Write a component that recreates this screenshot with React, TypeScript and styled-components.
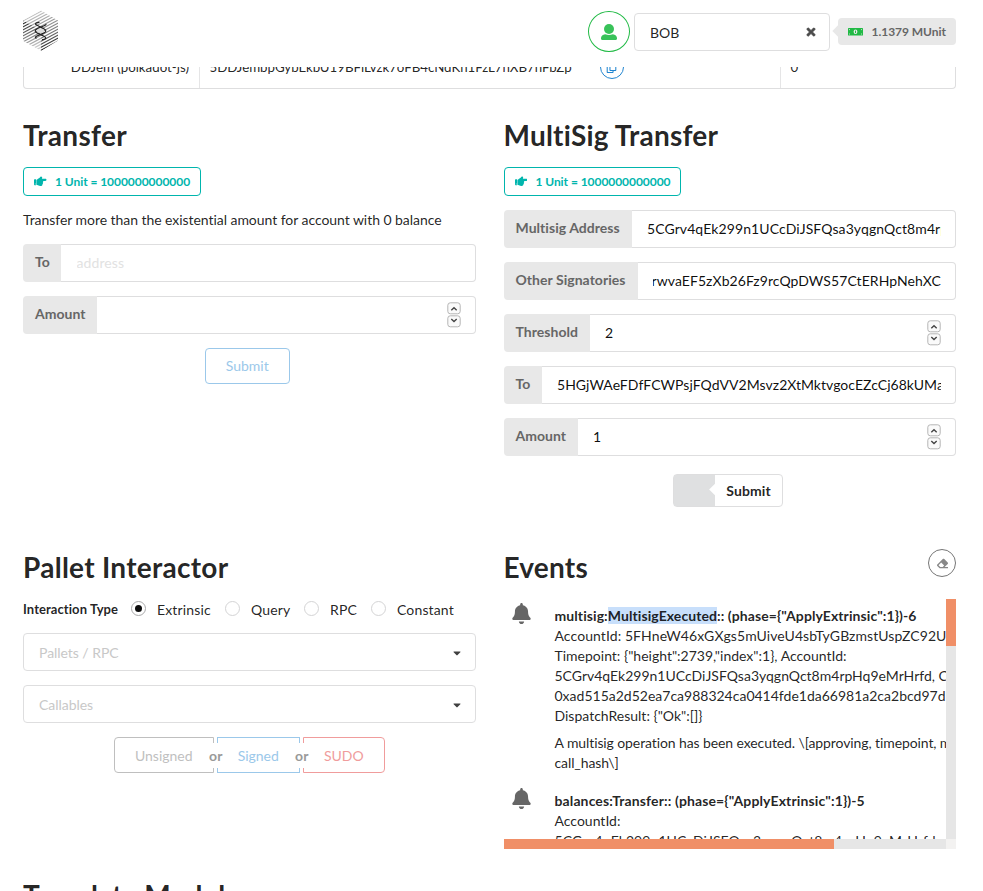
import React from 'react';
import styled, { createGlobalStyle } from 'styled-components';
import {
  FaBell,
  FaCaretDown,
  FaEraser,
  FaHandPointRight,
  FaRegCopy,
  FaTimes,
} from 'react-icons/fa';

const GlobalStyle = createGlobalStyle`
  *, *::before, *::after { box-sizing: border-box; }
  body {
    margin: 0;
    background: #fff;
    color: rgba(0, 0, 0, 0.87);
    font-family: Lato, 'Liberation Sans', sans-serif;
    font-size: 14px;
    line-height: 20px;
  }
`;

const Page = styled.div`
  height: 891px;
  padding: 0 27px 0 23px;
  overflow: hidden;
`;

const Header = styled.header`
  display: flex;
  align-items: flex-start;
  height: 67px;
`;

const Logo = styled.svg`
  display: block;
  margin-top: 10px;
`;

const Avatar = styled.div`
  display: flex;
  align-items: center;
  justify-content: center;
  width: 42px;
  height: 41px;
  margin: 11px 4px 0 auto;
  padding-top: 1px;
  border: 1px solid #21ba45;
  border-radius: 50%;
  color: #38c259;
`;

const AccountSelect = styled.div`
  display: flex;
  align-items: center;
  justify-content: space-between;
  width: 196px;
  height: 38px;
  margin-top: 13px;
  padding: 2px 12px 0 15px;
  border: 1px solid #dededf;
  border-radius: 4px;
`;

const ClearIcon = styled(FaTimes)`
  margin-top: -2px;
  color: #4a4a4a;
  stroke: #4a4a4a;
  stroke-width: 30;
`;

const Balance = styled.div`
  position: relative;
  display: flex;
  align-items: center;
  gap: 9px;
  width: 118px;
  height: 27px;
  margin: 18px 0 0 8px;
  padding: 0 9px 0 9.5px;
  border-radius: 4px;
  background: #e8e8e8;
  color: #666;
  font-size: 12px;
  font-weight: 700;
  letter-spacing: -0.04px;
  white-space: nowrap;
  &::before {
    content: '';
    position: absolute;
    left: -4px;
    top: 9px;
    width: 8px;
    height: 8px;
    background: #e8e8e8;
    transform: rotate(45deg);
  }
  svg { color: #21ba45; flex: none; }
`;

const TableWindow = styled.div`
  display: flex;
  align-items: flex-end;
  height: 22px;
  overflow: hidden;
`;

const TableRow = styled.div`
  display: grid;
  grid-template-columns: 175px 581px 1fr;
  width: 100%;
  height: 44px;
  border: 1px solid #dededf;
  border-top: 0;
  border-radius: 0 0 4px 4px;
  font-size: 13.3px;
`;

const Cell = styled.div<{ $right?: boolean; $track?: number }>`
  display: flex;
  align-items: center;
  justify-content: ${(p) => (p.$right ? 'flex-end' : 'flex-start')};
  padding: 1px 10px 0 9.5px;
  letter-spacing: ${(p) => p.$track ?? 0}px;
  white-space: nowrap;
  & + & { border-left: 1px solid #e5e5e6; }
`;

const CopyButton = styled.div`
  display: flex;
  align-items: center;
  justify-content: center;
  width: 24px;
  height: 24px;
  margin-left: 28px;
  border: 1px solid #2185d0;
  border-radius: 50%;
  color: #2185d0;
`;

const Columns = styled.div<{ $height: number }>`
  display: grid;
  grid-template-columns: 452.5px 452.5px;
  column-gap: 28px;
  height: ${(p) => p.$height}px;
  padding-top: 28px;
`;

const Column = styled.section`
  display: flex;
  flex-direction: column;
  align-items: stretch;
  min-width: 0;
`;

const Title = styled.h1<{ $track?: number }>`
  margin: 0;
  font-size: 28px;
  line-height: 36px;
  font-weight: 700;
  letter-spacing: ${(p) => p.$track ?? 0.2}px;
  white-space: nowrap;
`;

const UnitLabel = styled.div<{ $width: number }>`
  display: flex;
  align-items: center;
  gap: 8.5px;
  width: ${(p) => p.$width}px;
  height: 29px;
  margin: 14px 0 0;
  padding: 0 9px 0 10px;
  border: 1px solid #00b5ad;
  border-radius: 4px;
  color: #00b5ad;
  font-size: 12px;
  font-weight: 700;
  letter-spacing: -0.05px;
  white-space: nowrap;
`;

const Hint = styled.p`
  margin: 14px 0 0;
  letter-spacing: -0.05px;
`;

const Field = styled.div`
  display: flex;
  height: 38px;
  margin-top: 14px;
`;

const FieldLabel = styled.div<{ $width: number }>`
  flex: none;
  width: ${(p) => p.$width}px;
  padding: 8px 0 0 12px;
  border-radius: 4px 0 0 4px;
  background: #e8e8e8;
  color: #666;
  font-weight: 700;
  letter-spacing: 0.04px;
  white-space: nowrap;
`;

const FieldBox = styled.div`
  display: flex;
  flex: 1;
  align-items: center;
  justify-content: space-between;
  min-width: 0;
  padding: 0 14px 0 15.5px;
  border: 1px solid #dededf;
  border-left: 0;
  border-radius: 0 4px 4px 0;
`;

const FieldText = styled.div<{ $faded?: boolean; $end?: boolean; $track: number }>`
  display: flex;
  flex: 1;
  justify-content: ${(p) => (p.$end ? 'flex-end' : 'flex-start')};
  min-width: 0;
  overflow: hidden;
  color: ${(p) => (p.$faded ? '#e2e2e2' : 'rgba(0, 0, 0, 0.95)')};
  letter-spacing: ${(p) => p.$track}px;
  white-space: nowrap;
`;

const SpinnerArt = styled.svg`
  display: block;
  margin-top: -1px;
`;

const SubmitButton = styled.div`
  display: flex;
  align-items: center;
  justify-content: center;
  align-self: center;
  width: 85px;
  height: 36px;
  margin: 14px 0 0 -4px;
  border: 1px solid #9bc8ea;
  border-radius: 4px;
  color: #9bc8ea;
`;

const LabeledSubmit = styled.div`
  display: flex;
  align-self: center;
  width: 110px;
  height: 33px;
  margin: 18px 0 0 -4px;
  border: 1px solid #dededf;
  border-radius: 4px;
  font-weight: 700;
`;

const SubmitHandle = styled.div`
  position: relative;
  width: 41px;
  background: #dfe0e1;
  overflow: hidden;
  &::after {
    content: '';
    position: absolute;
    right: -5px;
    top: 10px;
    width: 9px;
    height: 9px;
    background: #fff;
    transform: rotate(45deg);
  }
`;

const SubmitText = styled.div`
  padding: 6px 0 0 11.5px;
  letter-spacing: 0.1px;
`;

const RadioRow = styled.div`
  display: flex;
  align-items: center;
  height: 20px;
  margin-top: 14px;
  white-space: nowrap;
`;

const RadioTitle = styled.span`
  width: 108px;
  font-size: 13px;
  font-weight: 700;
  letter-spacing: 0.07px;
`;

const RadioOption = styled.div<{ $width: number }>`
  display: flex;
  align-items: center;
  gap: 11px;
  width: ${(p) => p.$width}px;
  padding-top: 1px;
  letter-spacing: 0.14px;
`;

const RadioDot = styled.span<{ $on?: boolean }>`
  display: flex;
  align-items: center;
  justify-content: center;
  flex: none;
  width: 15px;
  height: 15px;
  margin-top: -2px;
  border: 1px solid ${(p) => (p.$on ? '#a9a9aa' : '#d4d4d5')};
  border-radius: 50%;
  &::after {
    content: '';
    width: 7px;
    height: 7px;
    border-radius: 50%;
    background: ${(p) => (p.$on ? '#0d0d0d' : 'transparent')};
  }
`;

const Dropdown = styled.div`
  display: flex;
  align-items: center;
  justify-content: space-between;
  height: 38px;
  margin-top: 14px;
  padding: 2px 12px 0 15px;
  border: 1px solid #dededf;
  border-radius: 4px;
  color: #c8c8c8;
  letter-spacing: -0.05px;
  svg { color: #404040; margin-top: -1px; }
`;

const ButtonGroup = styled.div`
  display: flex;
  align-self: center;
  gap: 3px;
  margin: 14px 0 0 0;
`;

const GroupButton = styled.div<{ $color: string; $width: number; $edge?: 'left' | 'right' }>`
  position: relative;
  display: flex;
  align-items: center;
  justify-content: center;
  width: ${(p) => p.$width}px;
  height: 36px;
  padding-top: 1px;
  border: 1px solid ${(p) => p.$color};
  border-radius: ${(p) => (p.$edge === 'left' ? '4px 0 0 4px' : p.$edge === 'right' ? '0 4px 4px 0' : '0')};
  color: ${(p) => p.$color};
`;

const Or = styled.span`
  position: absolute;
  right: -15px;
  top: 5px;
  z-index: 1;
  width: 24px;
  height: 25px;
  padding-top: 3px;
  background: #fff;
  color: #999;
  font-weight: 700;
  text-align: center;
`;

const TitleRow = styled.div`
  display: flex;
  justify-content: space-between;
`;

const EraseButton = styled.div`
  display: flex;
  align-items: center;
  justify-content: center;
  width: 28px;
  height: 28px;
  border: 1px solid #767676;
  border-radius: 50%;
  color: #888;
`;

const Scroller = styled.div`
  display: grid;
  grid-template-columns: 442.5px 10px;
  grid-template-rows: 240px 10px;
  height: 250px;
  margin-top: 14px;
`;

const Feed = styled.div`
  overflow: hidden;
  padding-top: 3px;
`;

const FeedEvent = styled.article`
  display: flex;
  height: 185px;
  white-space: nowrap;
`;

const EventIcon = styled.div`
  flex: none;
  width: 51px;
  padding: 1px 0 0 7px;
  color: #666;
  svg { display: block; }
`;

const EventBody = styled.div`
  padding-top: 4px;
`;

const EventSummary = styled.div<{ $track: number }>`
  font-weight: 700;
  letter-spacing: ${(p) => p.$track}px;
`;

const EventLine = styled.div<{ $track?: number }>`
  letter-spacing: ${(p) => p.$track ?? 0}px;
`;

const Highlight = styled.mark`
  background: #c8dffb;
  color: inherit;
`;

const EventExtra = styled.p`
  margin: 7px 0 0;
  letter-spacing: -0.1px;
`;

const Track = styled.div`
  background: #e6e6e6;
`;

const Thumb = styled.div<{ $vertical?: boolean }>`
  width: ${(p) => (p.$vertical ? '10px' : '330px')};
  height: ${(p) => (p.$vertical ? '47px' : '10px')};
  background: #f08f67;
`;

const Corner = styled.div`
  background: #f3f2f1;
`;

function HexLogo() {
  const stripes = Array.from({ length: 20 }, (_, i) => -1 + i * 3);
  return (
    <Logo width="36" height="42" viewBox="0 0 36 42">
      <defs>
        <clipPath id="hex">
          <path d="M18 .5 35 10.5V30.5L18 41 0 31V10.5Z" />
        </clipPath>
        <linearGradient id="ink" gradientUnits="userSpaceOnUse" x1="10" y1="2" x2="26" y2="40">
          <stop offset="0" stopColor="#ccc" />
          <stop offset=".35" stopColor="#999" />
          <stop offset=".62" stopColor="#777" />
          <stop offset="1" stopColor="#111" />
        </linearGradient>
        <linearGradient id="inkLeft" gradientUnits="userSpaceOnUse" x1="0" y1="12" x2="12" y2="38">
          <stop offset="0" stopColor="#222" />
          <stop offset=".5" stopColor="#777" />
          <stop offset="1" stopColor="#ccc" />
        </linearGradient>
        <clipPath id="leftFace">
          <path d="M0 10.5 18 20.5V41L0 31Z" />
        </clipPath>
        <clipPath id="restFaces">
          <path d="M0 10.5 18 20.5V42H36V0H0Z" />
        </clipPath>
      </defs>
      <g clipPath="url(#hex)" strokeWidth="1.15" fill="none">
        {stripes.map((y) => (
          <path key={y} d={`M-1 ${y + 6.5}L37 ${y - 14}`} stroke="url(#ink)" clipPath="url(#restFaces)" />
        ))}
        {stripes.map((y) => (
          <path key={y} d={`M-1 ${y + 6.5}L37 ${y - 14}`} stroke="url(#inkLeft)" clipPath="url(#leftFace)" />
        ))}
      </g>
      <ellipse cx="17.500" cy="20.700" rx="3.600" ry="2.200" fill="#ddd" />
      <g fill="none" strokeLinecap="round" stroke="#222" strokeWidth="1.200">
        <path d="M16 12.300C12 12.800 11.500 14 14 15.200L20 18.300C23.800 20.200 23.800 21.600 20 23.400L14 26C12 27 12 27.700 13.200 28" />
        <path d="M23 14.300C22.800 15 22 15.300 20.500 16L15 18.300C11.200 20.200 11.200 21.600 15 23.400L21 26.300C24 28 22.800 29.300 19.500 29.600" />
      </g>
    </Logo>
  );
}

function UserIcon() {
  return (
    <svg width="16" height="16" viewBox="0 0 16 16" fill="currentColor">
      <circle cx="8" cy="5" r="5" />
      <path d="M4.200 10.200C6.500 11.200 9.500 11.200 11.800 10.200 14.300 10.400 16 12 16 14V14.800C16 15.500 15.500 16 14.800 16H1.200C.5 16 0 15.500 0 14.800V14C0 12 1.700 10.400 4.200 10.200Z" />
    </svg>
  );
}

function MoneyIcon() {
  return (
    <svg width="15" height="8" viewBox="0 0 15 8">
      <rect width="15" height="7.500" rx=".6" fill="currentColor" />
      <ellipse cx="7.500" cy="3.800" rx="1.900" ry="2.200" fill="#e8e8e8" />
      <path d="M7.500 2.600V5" stroke="currentColor" strokeWidth="1" />
      <path d="M1 1.600H2M13 1.600H14M1 6H2M13 6H14" stroke="#e8e8e8" strokeWidth=".8" />
    </svg>
  );
}

function Spinner() {
  return (
    <SpinnerArt width="14" height="26" viewBox="0 0 14 26" fill="none">
      <rect x=".8" y=".8" width="12.400" height="11" rx="2.500" fill="#fafafa" stroke="#b5b5b5" />
      <rect x=".8" y="13.800" width="12.400" height="11" rx="2.500" fill="#fafafa" stroke="#b5b5b5" />
      <path d="M4.300 8.300 7 5.800 9.700 8.300M4.300 17 7 19.500 9.700 17" stroke="#444" strokeWidth="1.400" />
    </SpinnerArt>
  );
}

interface EntryProps {
  label: string;
  labelWidth: number;
  value?: string;
  placeholder?: string;
  numeric?: boolean;
  end?: boolean;
  track?: number;
}

function Entry({ label, labelWidth, value, placeholder, numeric, end, track = 0.1 }: EntryProps) {
  return (
    <Field>
      <FieldLabel $width={labelWidth}>{label}</FieldLabel>
      <FieldBox>
        <FieldText $faded={!value} $end={end} $track={track}>{value ?? placeholder}</FieldText>
        {numeric && <Spinner />}
      </FieldBox>
    </Field>
  );
}

function Unit({ width }: { width: number }) {
  return (
    <UnitLabel $width={width}>
      <FaHandPointRight size={12.5} />
      1 Unit = 1000000000000
    </UnitLabel>
  );
}

const radios = [
  { name: 'Extrinsic', width: 94 },
  { name: 'Query', width: 79 },
  { name: 'RPC', width: 67 },
  { name: 'Constant', width: 90 },
];

export default function App() {
  return (
    <Page>
      <GlobalStyle />
      <Header>
        <HexLogo />
        <Avatar><UserIcon /></Avatar>
        <AccountSelect>
          <span>BOB</span>
          <ClearIcon size={12} />
        </AccountSelect>
        <Balance>
          <MoneyIcon />
          1.1379 MUnit
        </Balance>
      </Header>
      <TableWindow>
        <TableRow>
          <Cell $right>DDJem (polkadot-js)</Cell>
          <Cell $track={-0.03}>
            5DDJembpGybEkbU19BFiLvzk7oFB4cNdKn1FzL7nXB7nFbZp
            <CopyButton><FaRegCopy size={11} /></CopyButton>
          </Cell>
          <Cell>0</Cell>
        </TableRow>
      </TableWindow>

      <Columns $height={432}>
        <Column>
          <Title $track={0.3}>Transfer</Title>
          <Unit width={178} />
          <Hint>Transfer more than the existential amount for account with 0 balance</Hint>
          <Entry label="To" labelWidth={38} placeholder="address" />
          <Entry label="Amount" labelWidth={74} numeric />
          <SubmitButton>Submit</SubmitButton>
        </Column>
        <Column>
          <Title>MultiSig Transfer</Title>
          <Unit width={177} />
          <Entry label="Multisig Address" labelWidth={128} value="5CGrv4qEk299n1UCcDiJSFQsa3yqgnQct8m4rpHq9eMrHrfd" track={0.09} />
          <Entry label="Other Signatories" labelWidth={134} value="rwvaEF5zXb26Fz9rcQpDWS57CtERHpNehXC" end track={0.07} />
          <Entry label="Threshold" labelWidth={86} value="2" numeric />
          <Entry label="To" labelWidth={38} value="5HGjWAeFDfFCWPsjFQdVV2Msvz2XtMktvgocEZcCj68kUMaw" track={0.03} />
          <Entry label="Amount" labelWidth={74} value="1" numeric />
          <LabeledSubmit>
            <SubmitHandle />
            <SubmitText>Submit</SubmitText>
          </LabeledSubmit>
        </Column>
      </Columns>

      <Columns $height={356}>
        <Column>
          <Title $track={0.27}>Pallet Interactor</Title>
          <RadioRow>
            <RadioTitle>Interaction Type</RadioTitle>
            {radios.map((r, i) => (
              <RadioOption key={r.name} $width={r.width}>
                <RadioDot $on={i === 0} />
                {r.name}
              </RadioOption>
            ))}
          </RadioRow>
          <Dropdown>Pallets / RPC<FaCaretDown size={12} /></Dropdown>
          <Dropdown>Callables<FaCaretDown size={12} /></Dropdown>
          <ButtonGroup>
            <GroupButton $color="#bfbfbf" $width={100} $edge="left">Unsigned<Or>or</Or></GroupButton>
            <GroupButton $color="#9bc8ea" $width={83}>Signed<Or>or</Or></GroupButton>
            <GroupButton $color="#f09c9c" $width={82} $edge="right">SUDO</GroupButton>
          </ButtonGroup>
        </Column>
        <Column>
          <TitleRow>
            <Title>Events</Title>
            <EraseButton><FaEraser size={11} /></EraseButton>
          </TitleRow>
          <Scroller>
            <Feed>
              <FeedEvent>
                <EventIcon><FaBell size={21} /></EventIcon>
                <EventBody>
                  <EventSummary $track={0.08}>
                    multisig:<Highlight>MultisigExecuted</Highlight>:: (phase=&#123;"ApplyExtrinsic":1&#125;)-6
                  </EventSummary>
                  <EventLine $track={0.08}>AccountId: 5FHneW46xGXgs5mUiveU4sbTyGBzmstUspZC92UhjJM694ty,</EventLine>
                  <EventLine>Timepoint: &#123;"height":2739,"index":1&#125;, AccountId:</EventLine>
                  <EventLine>5CGrv4qEk299n1UCcDiJSFQsa3yqgnQct8m4rpHq9eMrHrfd, CallHash:</EventLine>
                  <EventLine>0xad515a2d52ea7ca988324ca0414fde1da66981a2ca2bcd97d</EventLine>
                  <EventLine>DispatchResult: &#123;"Ok":[]&#125;</EventLine>
                  <EventExtra>
                    A multisig operation has been executed. \[approving, timepoint, multisig,<br />
                    call_hash\]
                  </EventExtra>
                </EventBody>
              </FeedEvent>
              <FeedEvent>
                <EventIcon><FaBell size={21} /></EventIcon>
                <EventBody>
                  <EventSummary $track={0.12}>balances:Transfer:: (phase=&#123;"ApplyExtrinsic":1&#125;)-5</EventSummary>
                  <EventLine>AccountId:</EventLine>
                  <EventLine $track={0.08}>5CGrv4qEk299n1UCcDiJSFQsa3yqgnQct8m4rpHq9eMrHrfd,</EventLine>
                </EventBody>
              </FeedEvent>
            </Feed>
            <Track><Thumb $vertical /></Track>
            <Track><Thumb /></Track>
            <Corner />
          </Scroller>
        </Column>
      </Columns>

      <Title $track={0.05}>Template Module</Title>
    </Page>
  );
}
